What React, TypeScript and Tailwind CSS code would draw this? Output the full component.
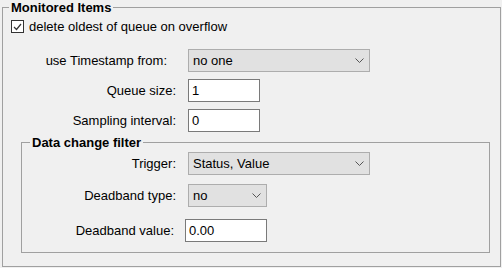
import React from "react";

const Chevron = () => (
  <svg width="9" height="5" viewBox="0 0 9 5" className="shrink-0">
    <polyline points="0.5,0.5 4.5,4.5 8.5,0.5" fill="none" stroke="#555" strokeWidth="1" />
  </svg>
);

const Select = ({ value, w }: { value: string; w: string }) => (
  <div className={`${w} h-[23px] bg-[#e1e1e1] border border-[#adadad] flex items-center justify-between pl-[4px] pr-[5px]`}>
    <span>{value}</span>
    <Chevron />
  </div>
);

const Input = ({ value, w }: { value: string; w: string }) => (
  <div className={`${w} h-[23px] bg-white border border-[#7a7a7a] flex items-center pl-[3px]`}>
    <span>{value}</span>
  </div>
);

export default function App() {
  return (
    <div
      className="w-[502px] h-[268px] bg-[#f0f0f0] text-[13px] leading-[15px] text-black overflow-hidden"
      style={{ fontFamily: '"Liberation Sans", Arial, sans-serif' }}
    >
      <fieldset className="ml-[2px] w-[499px] h-[267px] border border-[#a0a0a0] p-0 m-0 min-w-0">
        <legend className="ml-[6px] px-[2px] font-bold text-[13px] leading-[15px]">Monitored Items</legend>
        <div className="flex items-center mt-[4px] ml-[8px] h-[15px]">
          <div className="w-[13px] h-[13px] border border-[#333] bg-white flex items-center justify-center">
            <svg width="9" height="8" viewBox="0 0 9 8">
              <polyline points="1,4 3.5,6.5 8,1" fill="none" stroke="#333" strokeWidth="1.2" />
            </svg>
          </div>
          <span className="ml-[5px]">delete oldest of queue on overflow</span>
        </div>

        <div className="flex items-center mt-[15px]">
          <div className="w-[173px] text-right pr-[9px]">use Timestamp from:</div>
          <div className="ml-[12px]">
            <Select value="no one" w="w-[182px]" />
          </div>
        </div>
        <div className="flex items-center mt-[7px]">
          <div className="w-[173px] text-right">Queue size:</div>
          <div className="ml-[12px]">
            <Input value="1" w="w-[72px]" />
          </div>
        </div>
        <div className="flex items-center mt-[7px]">
          <div className="w-[173px] text-right">Sampling interval:</div>
          <div className="ml-[12px]">
            <Input value="0" w="w-[72px]" />
          </div>
        </div>

        <fieldset className="mt-[3px] ml-[18px] w-[469px] border border-[#a0a0a0] p-0 pb-[10px] min-w-0">
          <legend className="ml-[8px] px-[2px] font-bold text-[13px] leading-[15px]">Data change filter</legend>
          <div className="flex items-center mt-[2px]">
            <div className="w-[154px] text-right">Trigger:</div>
            <div className="ml-[12px]">
              <Select value="Status, Value" w="w-[182px]" />
            </div>
          </div>
          <div className="flex items-center mt-[9px]">
            <div className="w-[154px] text-right">Deadband type:</div>
            <div className="ml-[12px]">
              <Select value="no" w="w-[79px]" />
            </div>
          </div>
          <div className="flex items-center mt-[12px]">
            <div className="w-[154px] text-right pr-[2px]">Deadband value:</div>
            <div className="ml-[9px]">
              <Input value="0.00" w="w-[82px]" />
            </div>
          </div>
        </fieldset>
      </fieldset>
    </div>
  );
}
